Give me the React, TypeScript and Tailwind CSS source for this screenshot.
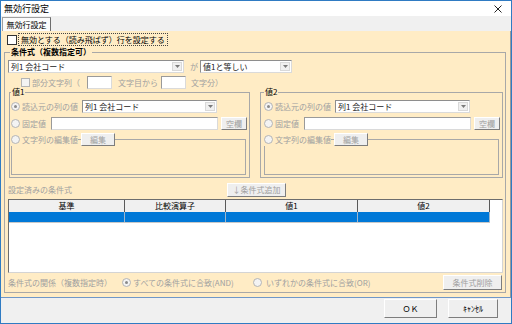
import type { ReactNode } from 'react';

const DIS = 'text-[#a0a0a0]';

function Arrow() {
  return (
    <div className="w-[10px] my-px mr-px flex items-center justify-center bg-[#f0f0f0] border border-[#d9d9d9]">
      <svg width="5" height="3" viewBox="0 0 5 3">
        <path d="M0 0h5L2.5 3z" fill="#7a7a7a" />
      </svg>
    </div>
  );
}

function Combo({ className, text }: { className: string; text: string }) {
  return (
    <div className={`flex h-[13px] items-stretch border border-[#8e8e8e] border-r-[#dadada] border-b-[#dadada] bg-white shrink-0 ${className}`}>
      <span className="flex-1 pl-[2px] flex items-center text-[#222] whitespace-nowrap">{text}</span>
      <Arrow />
    </div>
  );
}

function Input({ className }: { className: string }) {
  return (
    <div className={`h-[13px] bg-white border border-[#9a9a9a] border-r-[#dadada] border-b-[#dadada] shrink-0 ${className}`} />
  );
}

function Btn({
  className,
  children,
  disabled,
}: {
  className: string;
  children: ReactNode;
  disabled?: boolean;
}) {
  return (
    <div
      className={`flex items-center justify-center shrink-0 whitespace-nowrap bg-[#efefef] border border-t-white border-l-white border-r-[#7d7d7d] border-b-[#7d7d7d] ${
        disabled ? DIS : 'text-black'
      } ${className}`}
    >
      {children}
    </div>
  );
}

function Radio({ checked }: { checked?: boolean }) {
  return (
    <span className="w-[9px] h-[9px] rounded-full border border-[#b4b4b4] bg-[#f3f3f3] flex items-center justify-center shrink-0">
      {checked && <span className="w-[3px] h-[3px] rounded-full bg-[#8a8a8a]" />}
    </span>
  );
}

// 値1 / 値2 group
function ValueGroup({ title, className }: { title: string; className: string }) {
  return (
    <fieldset className={`-mt-px border border-[#a8a8a8] pt-[4px] pb-[2px] shrink-0 ${className}`}>
      <legend className="px-px leading-[8px]">{title}</legend>
      <div className="flex items-center h-[13px]">
        <Radio checked />
        <span className={`ml-[2px] w-[60px] ${DIS} whitespace-nowrap`}>読込元の列の値</span>
        <Combo className="w-[135px]" text="列1 会社コード" />
      </div>
      <div className="flex items-center h-[13px] mt-[4px]">
        <Radio />
        <span className={`ml-[2px] w-[29px] ${DIS}`}>固定値</span>
        <Input className="w-[167px]" />
        <Btn className="ml-[3px] w-[26px] h-[13px]" disabled>
          空欄
        </Btn>
      </div>
      <fieldset className="mt-[3px] w-[235px] border border-[#a8a8a8]">
        <legend className="-ml-px">
          <div className="flex items-center h-[13px]">
            <Radio />
            <span className={`ml-[2px] ${DIS} whitespace-nowrap`}>文字列の編集値</span>
            <span className="w-[3px] h-px bg-[#a8a8a8]" />
            <Btn className="w-[34px] h-[13px]" disabled>
              編集
            </Btn>
          </div>
        </legend>
        <div className="h-[28px]" />
      </fieldset>
    </fieldset>
  );
}

const COLS = [
  { label: '基準', w: 'w-[116px]' },
  { label: '比較演算子', w: 'w-[101px]' },
  { label: '値1', w: 'w-[132px]' },
  { label: '値2', w: 'w-[132px]' },
];

export default function App() {
  return (
    <div className="w-[512px] h-[324px] flex flex-col overflow-hidden border border-[#2f7bc3] bg-[#f0f0f0] text-[8px] leading-[10px] text-black font-['Noto_Sans_CJK_JP','Noto_Sans_CJK_SC',sans-serif]">
      {/* Title bar */}
      <div className="h-[15px] shrink-0 bg-white flex items-center pl-[3px]">
        <span className="text-[9px]">無効行設定</span>
        <svg className="ml-auto mr-[9px]" width="8" height="8" viewBox="0 0 8 8">
          <path d="M0.5 0.5l7 7M7.5 0.5l-7 7" stroke="#222" strokeWidth="1" />
        </svg>
      </div>

      {/* Tab strip */}
      <div className="h-[15px] shrink-0 flex items-end pl-px">
        <div className="h-[14px] w-[49px] bg-[#fbfbfb] border border-b-0 border-[#a0a0a0] border-r-[#6d6d6d] flex items-center justify-center">
          無効行設定
        </div>
      </div>

      {/* Tab page */}
      <div className="h-[267px] shrink-0 flex flex-col bg-[#ffecc5] border-r border-r-[#9a9a9a] border-b border-b-[#6f97c8] pt-[2px] pl-[3px]">
        <div className="flex items-center h-[13px]">
          <span className="ml-[3px] w-[10px] h-[10px] border border-[#333] bg-white shrink-0" />
          <span className="ml-px h-[13px] px-[2px] flex items-center border border-dotted border-[#444] whitespace-nowrap">
            無効とする（読み飛ばず）行を設定する
          </span>
        </div>

        {/* 条件式 group */}
        <fieldset className="mt-px w-[502px] border border-[#a8a8a8] pl-[3px] pr-[2px] pt-[3px] pb-[2px]">
          <legend className="ml-[2px] px-px font-bold leading-[10px]">条件式（複数指定可）</legend>

          <div className="flex items-center h-[13px]">
            <Combo className="w-[176px]" text="列1 会社コード" />
            <span className={`ml-[6px] ${DIS}`}>が</span>
            <Combo className="ml-[2px] w-[92px]" text="値1と等しい" />
          </div>

          <div className="flex items-center h-[13px] mt-[3px]">
            <span className="ml-[13px] w-[9px] h-[9px] border border-[#b4b4b4] bg-[#f3f3f3] shrink-0" />
            <span className={`ml-[2px] w-[55px] ${DIS} whitespace-nowrap`}>部分文字列（</span>
            <Input className="w-[25px]" />
            <span className={`ml-[6px] w-[43px] ${DIS} whitespace-nowrap`}>文字目から</span>
            <Input className="w-[25px]" />
            <span className={`ml-[5px] ${DIS} whitespace-nowrap`}>文字分）</span>
          </div>

          <div className="flex items-start">
            <ValueGroup title="値1" className="ml-px w-[241px] pl-px" />
            <ValueGroup title="値2" className="ml-[10px] w-[243px] pl-[3px]" />
          </div>

          <div className="flex items-center h-[14px] mt-[5px]">
            <span className={`w-[219px] ${DIS}`}>設定済みの条件式</span>
            <Btn className="w-[59px] h-[14px]" disabled>
              ↓条件式追加
            </Btn>
          </div>

          {/* Conditions table */}
          <div className="mt-[2px] w-[495px] h-[74px] bg-white border border-t-[#6d6d6d] border-l-[#6d6d6d] border-r-[#d4d4d4] border-b-[#d4d4d4]">
            <div className="flex h-[12px]">
              {COLS.map((c) => (
                <div
                  key={c.label}
                  className={`${c.w} bg-[#f0f0f0] border-r border-[#5a5a5a] flex items-center justify-center`}
                >
                  {c.label}
                </div>
              ))}
            </div>
            <div className="flex h-[11px] border-b border-[#c8c8c8] w-fit">
              {COLS.map((c) => (
                <div key={c.label} className={`${c.w} bg-[#0078d7] border-r border-[#9fb6cc]`} />
              ))}
            </div>
          </div>

          <div className="flex items-center h-[15px] mt-[2px]">
            <span className={`w-[114px] ${DIS} whitespace-nowrap`}>条件式の関係（複数指定時）</span>
            <Radio checked />
            <span className={`ml-[2px] w-[120px] ${DIS} whitespace-nowrap`}>すべての条件式に合致(AND)</span>
            <Radio />
            <span className={`ml-[4px] ${DIS} whitespace-nowrap`}>いずれかの条件式に合致(OR)</span>
            <Btn className="ml-auto mr-px w-[59px] h-[15px]" disabled>
              条件式削除
            </Btn>
          </div>
        </fieldset>
      </div>

      {/* Dialog buttons */}
      <div className="flex-1 flex items-start justify-end pt-px pr-[13px] gap-[11px]">
        <Btn className="w-[53px] h-[19px]">ＯＫ</Btn>
        <Btn className="w-[50px] h-[19px]">ｷｬﾝｾﾙ</Btn>
      </div>
    </div>
  );
}
